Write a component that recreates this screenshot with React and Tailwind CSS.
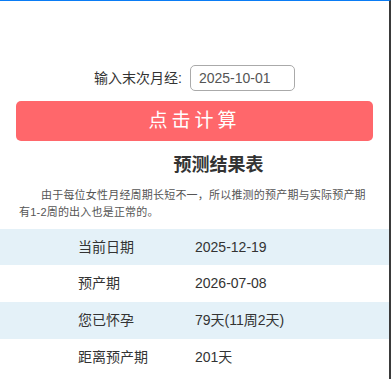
import React from 'react';

const rows = [
  { label: '当前日期', value: '2025-12-19', shade: true },
  { label: '预产期', value: '2026-07-08', shade: false },
  { label: '您已怀孕', value: '79天(11周2天)', shade: true },
  { label: '距离预产期', value: '201天', shade: false },
];

const App = () => {
  return (
    <div className="min-h-screen bg-white border-t border-t-[#0a7cf5] border-r-2 border-r-[#3a3a3a] font-['Liberation_Sans','Noto_Sans_CJK_SC',sans-serif] text-[#333]">
      <div className="pt-[64px] flex items-center justify-center">
        <span className="text-[14px] mr-[8px]">输入末次月经:</span>
        <div className="w-[105px] h-[26px] border border-[#aaa] rounded-[5px] pl-[8px] flex items-center text-[14px] text-[#555]">
          2025-10-01
        </div>
      </div>

      <div className="px-[16px] mt-[10px]">
        <button className="w-full h-[40px] bg-[#ff676b] rounded-[5px] text-white text-[19px] tracking-[4px] flex items-center justify-center">
          点击计算
        </button>
      </div>

      <h2 className="mt-[12px] pl-[48px] text-center text-[18px] leading-[24px] font-bold text-[#333]">
        预测结果表
      </h2>

      <p className="mt-[10px] px-[19px] text-[11px] leading-[17px] text-[#555] indent-[22px] tracking-[0.2px]">
        由于每位女性月经周期长短不一，所以推测的预产期与实际预产期有1-2周的出入也是正常的。
      </p>

      <div className="mt-[8px]">
        {rows.map((row, i) => (
          <div
            key={i}
            className={`flex items-center text-[14px] text-[#333] ${i === 0 ? 'h-[36px]' : 'h-[37px]'} ${row.shade ? 'bg-[#e4f1f8]' : 'bg-white'}`}
          >
            <div className="w-[195px] pl-[78px]">{row.label}</div>
            <div>{row.value}</div>
          </div>
        ))}
      </div>
    </div>
  );
};

export default App;
